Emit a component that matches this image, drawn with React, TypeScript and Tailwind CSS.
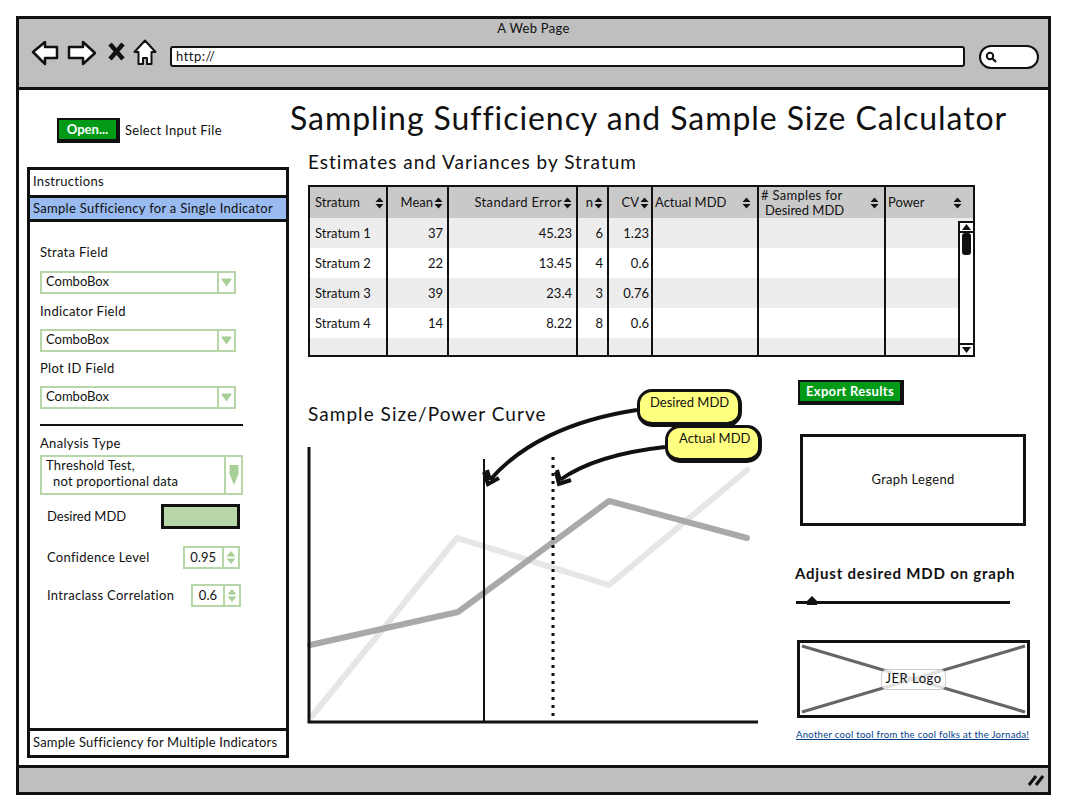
import React from 'react';

const SortIcon = () => (
  <svg width="9" height="12" viewBox="0 0 9 12" className="shrink-0">
    <path d="M0.5 5 L4.5 0.5 L8.5 5 Z M0.5 7 L4.5 11.5 L8.5 7 Z" fill="#111" />
  </svg>
);

const rows = [
  { name: 'Stratum 1', mean: '37', se: '45.23', n: '6', cv: '1.23' },
  { name: 'Stratum 2', mean: '22', se: '13.45', n: '4', cv: '0.6' },
  { name: 'Stratum 3', mean: '39', se: '23.4', n: '3', cv: '0.76' },
  { name: 'Stratum 4', mean: '14', se: '8.22', n: '8', cv: '0.6' },
];

const Combo = ({ children }: { children: React.ReactNode }) => (
  <div className="flex h-[23px] w-[196px] border-2 border-[#b7d7a8] bg-white tracking-[0px]">
    <div className="flex-1 pl-[4px] text-[13px] leading-[17px]">{children}</div>
    <div className="flex w-[17px] items-center justify-center border-l-2 border-[#b7d7a8]">
      <svg width="11" height="9" viewBox="0 0 11 9">
        <path d="M0.5 1.5 Q0.5 0.5 1.5 0.5 H9.5 Q10.5 0.5 10.5 1.5 L5.5 8.5 Z" fill="#a9cf98" />
      </svg>
    </div>
  </div>
);

const Spinner = ({ value, width }: { value: string; width: string }) => (
  <div className={`flex h-[23px] border-2 border-[#b7d7a8] bg-white tracking-[0px] ${width}`}>
    <div className="flex-1 pr-[6px] text-right text-[13px] leading-[18px]">{value}</div>
    <div className="flex w-[16px] items-center justify-center border-l-2 border-[#b7d7a8]">
      <svg width="10" height="15" viewBox="0 0 10 15">
        <path d="M0.5 6.5 L5 1 L9.5 6.5 Z M0.5 8.5 L5 14 L9.5 8.5 Z" fill="#a9cf98" />
      </svg>
    </div>
  </div>
);

const Sidebar = () => (
  <div className="flex h-[591px] w-[262px] flex-col border-[3px] border-[#111] bg-white tracking-[0.3px]">
    <div className="h-[25px] pl-[3px] text-[13px] leading-[22px]">Instructions</div>
    <div className="h-[27px] border-y-[3px] border-[#111] bg-[#99bbf0] pl-[3px] text-[13px] leading-[21px]">
      Sample Sufficiency for a Single Indicator
    </div>
    <div className="flex flex-1 flex-col pl-[10px]">
      <div className="mt-[21px] text-[13px] leading-[18px]">Strata Field</div>
      <div className="mt-[10px]"><Combo>ComboBox</Combo></div>
      <div className="mt-[8px] text-[13px] leading-[18px]">Indicator Field</div>
      <div className="mt-[9px]"><Combo>ComboBox</Combo></div>
      <div className="mt-[7px] text-[13px] leading-[18px]">Plot ID Field</div>
      <div className="mt-[9px]"><Combo>ComboBox</Combo></div>
      <div className="mt-[15px] h-[2px] w-[203px] bg-[#111]" />
      <div className="mt-[8px] text-[13px] leading-[18px]">Analysis Type</div>
      <div className="mt-[3px] flex h-[40px] w-[203px] border-2 border-[#b7d7a8] tracking-[0.2px]">
        <div className="flex-1 pl-[4px] text-[13px] leading-[16px]">
          <div>Threshold Test,</div>
          <div className="pl-[7px]">not proportional data</div>
        </div>
        <div className="flex w-[17px] items-center justify-center border-l-2 border-[#b7d7a8]">
          <svg width="10" height="22" viewBox="0 0 10 22">
            <path d="M0.5 1 H9.5 V10 L5 21 L0.5 10 Z" fill="#a9cf98" />
          </svg>
        </div>
      </div>
      <div className="mt-[9px] flex h-[25px] w-[200px] items-center justify-between pl-[7px]">
        <span className="text-[13px] tracking-[0px]">Desired MDD</span>
        <div className="h-[25px] w-[79px] border-[3px] border-[#111] bg-[#b7d7a8]" />
      </div>
      <div className="mt-[17px] flex h-[23px] w-[200px] items-center justify-between pl-[7px]">
        <span className="text-[13px]">Confidence Level</span>
        <Spinner value="0.95" width="w-[57px]" />
      </div>
      <div className="mt-[15px] flex h-[23px] w-[201px] items-center justify-between pl-[7px]">
        <span className="text-[13px]">Intraclass Correlation</span>
        <Spinner value="0.6" width="w-[50px]" />
      </div>
    </div>
    <div className="h-[27px] border-t-[3px] border-[#111] pl-[3px] text-[13px] leading-[23px] tracking-[0.18px]">
      Sample Sufficiency for Multiple Indicators
    </div>
  </div>
);

const StatsTable = () => (
  <div className="relative ml-[18px] mt-[10px] h-[172px] w-[667px] overflow-hidden border-2 border-[#111] bg-white text-[13px]">
    <div className="flex h-[31px] bg-[#c9c9c9]">
      <div className="flex w-[78px] items-center justify-between border-r-2 border-[#111] pl-[5px] pr-[2px]">Stratum <SortIcon /></div>
      <div className="flex w-[61px] items-center justify-end gap-[1px] border-r-2 border-[#111] pr-[4px]">Mean<SortIcon /></div>
      <div className="flex w-[129px] items-center justify-end gap-[1px] border-r-2 border-[#111] pr-[4px] tracking-[0.35px]">Standard Error<SortIcon /></div>
      <div className="flex w-[31px] items-center justify-end gap-[1px] border-r-2 border-[#111] pr-[4px]">n<SortIcon /></div>
      <div className="flex w-[44px] items-center justify-end gap-[1px] border-r-2 border-[#111] pr-[2px]">CV<SortIcon /></div>
      <div className="flex w-[106px] items-center justify-between border-r-2 border-[#111] pl-[2px] pr-[6px]">Actual MDD <SortIcon /></div>
      <div className="flex w-[127px] items-center justify-between border-r-2 border-[#111] pl-[2px] pr-[5px]">
        <div className="leading-[15px]">
          <div className="tracking-[0.3px]"># Samples for</div>
          <div className="pl-[4px]">Desired MDD</div>
        </div>
        <SortIcon />
      </div>
      <div className="flex flex-1 items-center justify-between pl-[2px] pr-[11px]">Power <SortIcon /></div>
    </div>
    {[...rows, null].map((r, i) => (
      <div key={i} className={`flex ${r ? 'h-[30px]' : 'h-[17px]'} items-center ${i % 2 === 0 ? 'bg-[#ededed]' : 'bg-white'}`}>
        <div className="flex h-full w-[78px] items-center border-r-2 border-[#111] pl-[5px] pt-[2px]">{r?.name}</div>
        <div className="flex h-full w-[61px] items-center justify-end border-r-2 border-[#111] pr-[4px] pt-[2px]">{r?.mean}</div>
        <div className="flex h-full w-[129px] items-center justify-end border-r-2 border-[#111] pr-[4px] pt-[2px]">{r?.se}</div>
        <div className="flex h-full w-[31px] items-center justify-end border-r-2 border-[#111] pr-[4px] pt-[2px]">{r?.n}</div>
        <div className="flex h-full w-[44px] items-center justify-end border-r-2 border-[#111] pr-[2px] pt-[2px]">{r?.cv}</div>
        <div className="h-full w-[106px] border-r-2 border-[#111]" />
        <div className="h-full w-[127px] border-r-2 border-[#111]" />
        <div className="h-full flex-1" />
      </div>
    ))}
    {/* scrollbar */}
    <div className="absolute bottom-0 right-0 top-[34px] flex w-[15px] flex-col border-l-2 border-[#111] bg-white">
      <div className="flex h-[12px] items-center justify-center border-y-2 border-[#111]">
        <svg width="9" height="6" viewBox="0 0 9 6"><path d="M0 6 L4.5 0 L9 6 Z" fill="#111" /></svg>
      </div>
      <div className="ml-[2px] h-[22px] w-[9px] rounded-[3px] bg-[#111]" />
      <div className="flex-1" />
      <div className="flex h-[12px] items-center justify-center border-t-2 border-[#111]">
        <svg width="9" height="6" viewBox="0 0 9 6"><path d="M0 0 L4.5 6 L9 0 Z" fill="#111" /></svg>
      </div>
    </div>
  </div>
);

const Chart = () => (
  <div className="relative ml-[15px] w-[470px]">
    <div className="ml-[3px] mt-[44px] text-[19px] leading-[26px] tracking-[1.05px]">Sample Size/Power Curve</div>
    <svg width="470" height="290" viewBox="305 440 470 290" className="mt-[13px] overflow-visible" fill="none">
      <path d="M312 716 L457 538 L609 585 L747 470" stroke="#e6e6e6" strokeWidth="6" strokeLinecap="round" strokeLinejoin="round" />
      <path d="M310 645 L458 612 L609 501 L747 538" stroke="#a9a9a9" strokeWidth="6" strokeLinecap="round" strokeLinejoin="round" />
      <path d="M309 447 V722 H758" stroke="#111" strokeWidth="3" />
      <path d="M484 459 V721" stroke="#111" strokeWidth="2" />
      <path d="M553 457 V721" stroke="#111" strokeWidth="3" strokeDasharray="3 5" />
      <path d="M637 410 C570 420 520 445 490 480" stroke="#111" strokeWidth="4" />
      <path d="M484 472 L488 484 L499 478 M490 480 L487 470" stroke="#111" strokeWidth="4" />
      <path d="M665 447 C620 452 585 462 560 480" stroke="#111" strokeWidth="4" />
      <path d="M556 472 L559 484 L571 480 M560 480 L557 470" stroke="#111" strokeWidth="4" />
    </svg>
    <div className="absolute left-[332px] top-[32px] h-[38px] w-[105px] rounded-[15px] border-[3px] border-b-[5px] border-r-[4px] border-[#111] bg-[#ffff80] pl-[10px] text-[13px] leading-[20px]">
      Desired MDD
    </div>
    <div className="absolute left-[360px] top-[68px] h-[38px] w-[97px] rounded-[15px] border-[3px] border-b-[5px] border-r-[4px] border-[#111] bg-[#ffff80] pl-[11px] text-[13px] leading-[21px]">
      Actual MDD
    </div>
  </div>
);

const RightPanel = () => (
  <div className="ml-[20px] flex w-[240px] flex-col">
    <div className="ml-[3px] flex h-[25px] w-[106px] items-center justify-center border-[2px] border-b-[4px] border-r-[4px] border-[#111] bg-[#009a17] text-[13px] font-bold tracking-[0.3px] text-white">
      Export Results
    </div>
    <div className="ml-[5px] mt-[29px] flex h-[92px] w-[226px] items-center justify-center border-[3px] border-[#111] text-[13px] tracking-[0.3px]">
      Graph Legend
    </div>
    <div className="mt-[37px] whitespace-nowrap text-[15px] font-bold leading-[20px] tracking-[0.8px]">Adjust desired MDD on graph</div>
    <div className="relative ml-[1px] mt-[18px] h-[3px] w-[214px] bg-[#111]">
      <svg width="10" height="9" viewBox="0 0 10 9" className="absolute left-[11px] top-[-5px]">
        <path d="M0 9 V5 L5 0 L10 5 V9 Z" fill="#111" />
      </svg>
    </div>
    <div className="relative ml-[2px] mt-[36px] flex h-[78px] w-[233px] items-center justify-center border-[3px] border-[#111]">
      <svg className="absolute inset-0 h-full w-full" viewBox="0 0 227 72" preserveAspectRatio="none">
        <path d="M2 3 L225 69 M225 3 L2 69" stroke="#666" strokeWidth="3" />
      </svg>
      <div className="relative flex h-[21px] w-[65px] items-center justify-center rounded-[6px] border border-[#ccc] bg-white/80 text-[13px] tracking-[0.5px]">JER Logo</div>
    </div>
    <div className="ml-[1px] mt-[10px] whitespace-nowrap text-[9.5px] leading-[13px] tracking-[0.3px] text-[#003c8a] underline">
      Another cool tool from the cool folks at the Jornada!
    </div>
  </div>
);

export default function App() {
  return (
    <div className="h-[810px] w-[1066px] bg-white p-[16px] font-[Lato,sans-serif] text-[#111]">
      <div className="flex h-[779px] w-[1035px] flex-col border-[3px] border-[#111]">
        {/* Browser chrome */}
        <div className="h-[71px] border-b-[3px] border-[#111] bg-[#bfbfbf]">
          <div className="text-center text-[13px] leading-[18px] tracking-[0.3px]">A Web Page</div>
          <div className="flex items-center pl-[12px] pt-[2px]">
            <svg width="28" height="26" viewBox="0 0 28 26" className="mb-[8px]">
              <path d="M2 12 L14 2 V7 H26 V18 H14 V24 Z" fill="#fff" stroke="#111" strokeWidth="2.5" strokeLinejoin="round" />
            </svg>
            <svg width="30" height="26" viewBox="0 0 30 26" className="mb-[8px] ml-[8px]">
              <path d="M2 7 H16 V2 L28 13 L16 24 V18 H2 Z" fill="#fff" stroke="#111" strokeWidth="2.5" strokeLinejoin="round" />
            </svg>
            <svg width="17" height="19" viewBox="0 0 17 19" className="mb-[10px] ml-[11px]">
              <path d="M2 2 L15 17 M15 2 L2 17" stroke="#111" strokeWidth="4.5" />
            </svg>
            <svg width="24" height="27" viewBox="0 0 24 27" className="mb-[8px] ml-[8px]">
              <path d="M12 1.5 L22.5 13 H18.5 V25 H14 V19 H10 V25 H5.5 V13 H1.5 Z" fill="#fff" stroke="#111" strokeWidth="2" strokeLinejoin="round" />
            </svg>
            <div className="ml-[13px] h-[21px] w-[795px] rounded-[3px] border-[2px] border-[#111] bg-white pl-[4px] text-[13px] leading-[17px] tracking-[0.5px]">
              http://
            </div>
            <div className="ml-[14px] flex h-[24px] w-[60px] items-center rounded-full border-[2px] border-[#111] bg-white pl-[4px]">
              <svg width="12" height="12" viewBox="0 0 12 12" fill="none">
                <circle cx="5" cy="5" r="3.2" stroke="#111" strokeWidth="2" />
                <path d="M7.5 7.5 L11 11" stroke="#111" strokeWidth="2.2" />
              </svg>
            </div>
          </div>
        </div>

        {/* Page */}
        <div className="flex flex-1">
          <div className="ml-[8px] flex w-[262px] flex-col">
            <div className="flex items-center pl-[30px] pt-[28px]">
              <div className="flex h-[25px] w-[63px] items-center justify-center border-[2px] border-b-[4px] border-r-[4px] border-[#111] bg-[#009a17] text-[13px] font-bold text-white">
                Open...
              </div>
              <div className="ml-[5px] text-[13px] tracking-[0.3px]">Select Input File</div>
            </div>
            <div className="mt-[24px]">
              <Sidebar />
            </div>
          </div>

          <div className="ml-[1px] flex flex-1 flex-col">
            <div className="mt-[9px] whitespace-nowrap text-[32px] leading-[38px] tracking-[0.93px]">
              Sampling Sufficiency and Sample Size Calculator
            </div>
            <div className="ml-[18px] mt-[12px] text-[19px] leading-[26px] tracking-[1px]">
              Estimates and Variances by Stratum
            </div>
            <StatsTable />
            <div className="flex">
              <Chart />
              <div className="mt-[23px]">
                <RightPanel />
              </div>
            </div>
          </div>
        </div>

        {/* Status bar */}
        <div className="flex h-[27px] items-center justify-end border-t-[3px] border-[#111] bg-[#bfbfbf] pr-[4px]">
          <svg width="16" height="12" viewBox="0 0 16 12">
            <path d="M1 11 L8 2 M8 11 L15 2" stroke="#111" strokeWidth="3" />
          </svg>
        </div>
      </div>
    </div>
  );
}
